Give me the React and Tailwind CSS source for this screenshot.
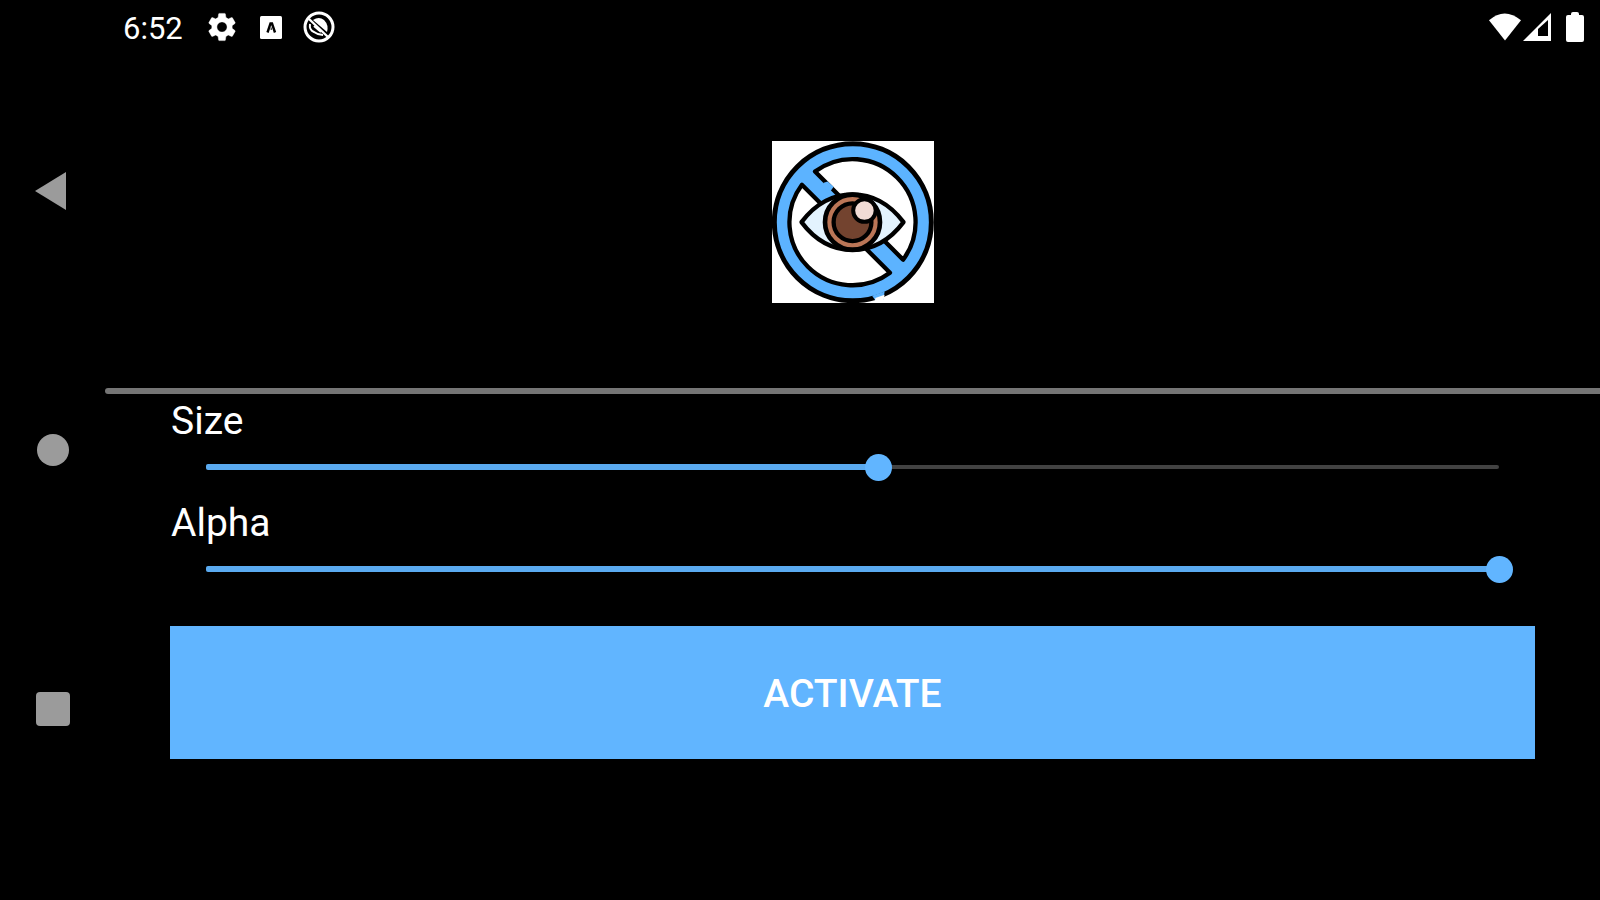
import React, { useState } from 'react';

const SettingsIcon = () => (
  <svg viewBox="0 0 24 24" className="w-[34px] h-[34px]" fill="currentColor" stroke="currentColor" strokeWidth="0.3">
    <path d="M19.14 12.94c.04-.3.06-.61.06-.94 0-.32-.02-.64-.07-.94l2.03-1.58c.18-.14.23-.41.12-.61l-1.92-3.32c-.12-.22-.37-.29-.59-.22l-2.39.96c-.5-.38-1.03-.7-1.62-.94l-.36-2.54c-.04-.24-.24-.41-.48-.41h-3.84c-.24 0-.43.17-.47.41l-.36 2.54c-.59.24-1.13.57-1.62.94l-2.39-.96c-.22-.08-.47 0-.59.22L2.74 8.87c-.12.21-.08.47.12.61l2.03 1.58c-.05.3-.09.63-.09.94s.02.64.07.94l-2.03 1.58c-.18.14-.23.41-.12.61l1.92 3.32c.12.22.37.29.59.22l2.39-.96c.5.38 1.03.7 1.62.94l.36 2.54c.05.24.24.41.48.41h3.84c.24 0 .44-.17.47-.41l.36-2.54c.59-.24 1.13-.56 1.62-.94l2.39.96c.22.08.47 0 .59-.22l1.92-3.32c.12-.22.07-.47-.12-.61l-2.01-1.58zM12 15.6c-1.98 0-3.6-1.62-3.6-3.6s1.62-3.6 3.6-3.6 3.6 1.62 3.6 3.6-1.62 3.6-3.6 3.6z" />
  </svg>
);

const KeyboardIcon = () => (
  <svg viewBox="0 0 22 23" className="w-[22px] h-[23px]">
    <rect width="22" height="23" rx="1.5" fill="currentColor" />
    <path d="M7.500 16.500 L10.500 7.500 H12 L15 16.500" fill="none" stroke="#000" strokeWidth="2.4" />
    <path d="M11.200 11.500 V14" stroke="#000" strokeWidth="1" />
  </svg>
);

const FilterIcon = () => (
  <svg viewBox="0 0 32 32" className="w-8 h-8" fill="none" stroke="currentColor">
    <circle cx="16" cy="16" r="14" strokeWidth="3" />
    <path d="M6 8 L25 26" strokeWidth="2.4" />
    <path d="M10 9 Q16 5 21 9 Q26 14 24 21 Z" fill="currentColor" stroke="none" />
    <path d="M7 13 Q6 19 11 21 Q15 24 20 24" strokeWidth="2" />
    <path d="M11 15 L18 21" strokeWidth="2" />
  </svg>
);

const WifiIcon = () => (
  <svg viewBox="0 0 33 28" className="w-8 h-7" fill="currentColor">
    <path d="M0 7 Q16 -7 33 7 L16.500 28 Z" />
  </svg>
);

const SignalIcon = () => (
  <svg viewBox="0 0 28 28" className="w-7 h-7">
    <path d="M0 28 L28 0 V28 Z" fill="currentColor" />
    <path d="M15 16 L25 7 V23 H15 Z" fill="#000" />
  </svg>
);

const BatteryIcon = () => (
  <svg viewBox="0 0 18 30" className="w-[18px] h-[30px]" fill="currentColor">
    <path d="M5 2 Q5 0 7 0 H11 Q13 0 13 2 V3 H16 Q18 3 18 5 V28 Q18 30 16 30 H2 Q0 30 0 28 V5 Q0 3 2 3 H5 Z" />
  </svg>
);

const EyeLogo = () => (
  <svg viewBox="38 32 489 489" className="w-[162px] h-[162px] bg-white" role="img" aria-label="Crossed eye">
    <circle cx="282" cy="277" r="237" fill="#5cb3ff" stroke="#000" strokeWidth="15" />
    <g transform="translate(281 277) rotate(45)" fill="#fff" stroke="#000" strokeWidth="13" strokeLinejoin="round">
      <path d="M-188 -28 A190 190 0 0 1 188 -28 Z" />
      <path d="M-188 28 A190 190 0 0 0 188 28 Z" />
    </g>
    <path d="M194 158 L206 154 L224 170 L210 190 L190 172 Z" fill="#5cb3ff" />
    <path d="M340 499 L378 486 L374 512 L352 516 Z" fill="#5cb3ff" />
    <path d="M350 506 L378 496 L372 523 H348 Z" fill="#fff" />
    <path
      d="M127 277 Q190 193 281 193 Q372 193 435 277 Q372 361 281 361 Q190 361 127 277 Z"
      fill="#e3f3fe" stroke="#000" strokeWidth="13" strokeLinejoin="round"
    />
    <circle cx="281" cy="277" r="83" fill="#bb7657" stroke="#000" strokeWidth="14" />
    <circle cx="281" cy="277" r="57" fill="#73432f" stroke="#000" strokeWidth="13" />
    <circle cx="317" cy="242" r="34" fill="#f1dbd5" stroke="#000" strokeWidth="12" />
  </svg>
);

const Slider = ({ id, label, value, onChange }) => (
  <div>
    <label htmlFor={id} className="block pl-px text-[39px] leading-[46px]">{label}</label>
    <div className="relative flex items-center h-[46px] mx-[22px]">
      <div className="flex-1 flex items-center mx-[14px] h-1 rounded-sm bg-[#424242]">
        <div className="h-[6px] rounded-xs bg-[#5aaaf0]" style={{ width: `${value}%` }} />
      </div>
      <input
        id={id}
        type="range"
        min="0"
        max="100"
        value={value}
        onChange={e => onChange(Number(e.target.value))}
        className="absolute inset-0 w-full h-full appearance-none bg-transparent cursor-pointer focus:outline-none
                   [&::-webkit-slider-thumb]:appearance-none [&::-webkit-slider-thumb]:w-[27px] [&::-webkit-slider-thumb]:h-[27px]
                   [&::-webkit-slider-thumb]:rounded-full [&::-webkit-slider-thumb]:bg-[#61b5ff]"
      />
    </div>
  </div>
);

const App = () => {
  const [size, setSize] = useState(52);
  const [alpha, setAlpha] = useState(100);

  return (
    <div className="flex min-h-screen bg-black text-white font-['Roboto',sans-serif]">
      <nav className="flex flex-col justify-center gap-[209px] w-[105px] text-[#9b9b9b]">
        <button aria-label="Back" className="flex items-center justify-center h-[50px] pr-1">
          <svg viewBox="0 0 32 38" className="w-8 h-[38px]" fill="currentColor">
            <path d="M0 19 L31 0 V38 Z" />
          </svg>
        </button>
        <button aria-label="Home" className="flex items-center justify-center h-[50px]">
          <span className="w-8 h-8 rounded-full bg-current" />
        </button>
        <button aria-label="Recent apps" className="flex items-center justify-center h-[50px]">
          <span className="w-[34px] h-[34px] rounded-sm bg-current" />
        </button>
      </nav>

      <div className="flex-1">
        <header className="flex items-center justify-between h-[54px] pl-[18px] pr-4">
          <div className="flex items-center">
            <span className="pt-1 text-[31px] leading-10">6:52</span>
            <div className="flex items-center gap-[21px] pl-[22px]">
              <SettingsIcon />
              <KeyboardIcon />
              <FilterIcon />
            </div>
          </div>
          <div className="flex items-center">
            <WifiIcon />
            <div className="pl-[2px] pr-[15px]"><SignalIcon /></div>
            <BatteryIcon />
          </div>
        </header>

        <main>
          <div className="flex justify-center pt-[87px] pb-[85px] pl-px">
            <EyeLogo />
          </div>
          <hr className="h-[6px] border-0 rounded-l-sm bg-[#757575]" />
          <div className="px-[65px] pt-1">
            <div className="space-y-[10px]">
              <Slider id="size" label="Size" value={size} onChange={setSize} />
              <Slider id="alpha" label="Alpha" value={alpha} onChange={setAlpha} />
            </div>
            <button className="w-full h-[133px] mt-[34px] pt-1 bg-[#61b5ff] text-[39px] font-medium uppercase">
              Activate
            </button>
          </div>
        </main>
      </div>
    </div>
  );
};

export default App;
